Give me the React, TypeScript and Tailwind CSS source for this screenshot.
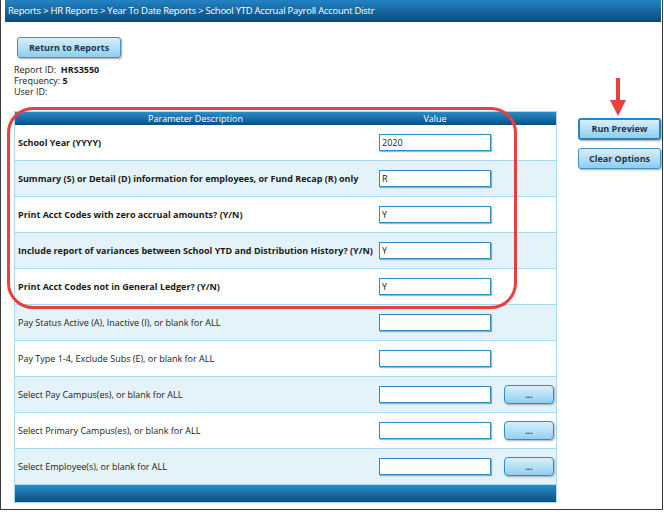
import React from "react";

const rows: { label: string; bold: boolean; value: string; btn: boolean }[] = [
  { label: "School Year (YYYY)", bold: true, value: "2020", btn: false },
  { label: "Summary (S) or Detail (D) information for employees, or Fund Recap (R) only", bold: true, value: "R", btn: false },
  { label: "Print Acct Codes with zero accrual amounts? (Y/N)", bold: true, value: "Y", btn: false },
  { label: "Include report of variances between School YTD and Distribution History? (Y/N)", bold: true, value: "Y", btn: false },
  { label: "Print Acct Codes not in General Ledger? (Y/N)", bold: true, value: "Y", btn: false },
  { label: "Pay Status Active (A), Inactive (I), or blank for ALL", bold: false, value: "", btn: false },
  { label: "Pay Type 1-4, Exclude Subs (E), or blank for ALL", bold: false, value: "", btn: false },
  { label: "Select Pay Campus(es), or blank for ALL", bold: false, value: "", btn: true },
  { label: "Select Primary Campus(es), or blank for ALL", bold: false, value: "", btn: true },
  { label: "Select Employee(s), or blank for ALL", bold: false, value: "", btn: true },
];

const font = { fontFamily: '"Open Sans", "DejaVu Sans", sans-serif' };

export default function App() {
  return (
    <div className="relative w-[664px] h-[512px] bg-white text-[#1a1a1a]" style={font}>
      <div className="relative w-[663px] h-[510px] border-l border-r border-b border-[#3a3a3a] pl-[4px] pr-[1px]">
        <div className="h-[22px] flex items-center pl-[3px] text-white text-[9.5px] tracking-[-0.25px] bg-gradient-to-b from-[#2383c4] to-[#0c4a7a]">
          Reports &gt; HR Reports &gt; Year To Date Reports &gt; School YTD Accrual Payroll Account Distr
        </div>

        <div className="flex pl-[12px] pt-[15px]">
          <button className="w-[104px] h-[21px] rounded-[3px] border border-[#3d92c9] bg-gradient-to-b from-[#d9eefa] to-[#8fcdef] text-[9px] font-bold text-[#1c3553] shadow-[1px_1px_2px_rgba(0,0,0,0.35)]">
            Return to Reports
          </button>
        </div>

        <div className="pl-[9px] pt-[6px] text-[9px]">
          <div className="h-[11px] leading-[11px]">
            Report ID:&nbsp;&nbsp;<span className="font-bold">HRS3550</span>
          </div>
          <div className="h-[11px] leading-[11px]">
            Frequency: <span className="font-bold">5</span>
          </div>
          <div className="h-[11px] leading-[11px]">User ID:</div>
        </div>

        <div className="flex items-start pt-[14px]">
          <div className="ml-[9px] w-[544px] border border-[#a9d9f0]">
            <div className="flex h-[13px] items-center text-white text-[9px] bg-gradient-to-b from-[#2a8cc9] to-[#0c4f80]">
              <div className="w-[361px] text-center">Parameter Description</div>
              <div className="w-[118px] text-center">Value</div>
              <div className="flex-1" />
            </div>
            {rows.map((r, i) => (
              <div
                key={i}
                className={`flex items-center h-[36px] border-b border-[#a9d9f0] ${i % 2 === 1 ? "bg-[#e4f3fa]" : "bg-white"}`}
              >
                <div className={`w-[361px] pl-[3px] text-[9px] whitespace-nowrap ${r.bold ? "font-bold" : ""}`}>{r.label}</div>
                <div className="w-[128px] pl-[3px]">
                  <div className="w-[112px] h-[17px] border border-[#2f8ccb] bg-white text-[9px] pl-[2px] leading-[15px] shadow-[1px_1px_1px_rgba(0,0,0,0.3)]">
                    {r.value}
                  </div>
                </div>
                {r.btn && (
                  <button className="w-[50px] h-[19px] rounded-[4px] border border-[#2f8ccb] bg-gradient-to-b from-[#d7eefa] to-[#92cff0] text-[8px] font-bold text-[#1c3553] leading-none shadow-[1px_1px_2px_rgba(0,0,0,0.3)]">
                    ...
                  </button>
                )}
              </div>
            ))}
            <div className="h-[17px] bg-gradient-to-b from-[#2a8cc9] to-[#0c4f80]" />
          </div>

          <div className="ml-[21px] mt-[7px] flex flex-col gap-[8px]">
            <button className="w-[83px] h-[22px] rounded-[3px] border-2 border-[#2387c6] bg-gradient-to-b from-[#d9eefa] to-[#8fcdef] text-[9px] font-bold text-[#1c3553] shadow-[1px_1px_2px_rgba(0,0,0,0.35)]">
              Run Preview
            </button>
            <button className="w-[83px] h-[21px] rounded-[3px] border border-[#3d92c9] bg-gradient-to-b from-[#d9eefa] to-[#8fcdef] text-[9px] font-bold text-[#1c3553] shadow-[1px_1px_2px_rgba(0,0,0,0.35)]">
              Clear Options
            </button>
          </div>
        </div>
      </div>

      {/* red highlight outline */}
      <div className="absolute left-[7px] top-[107px] w-[510px] h-[202px] rounded-[26px] border-[3px] border-[#e8403f] pointer-events-none" />

      {/* red arrow */}
      <svg className="absolute left-[609px] top-[78px]" width="18" height="40" viewBox="0 0 18 40">
        <rect x="7" y="0" width="4" height="23" fill="#e8403f" />
        <polygon points="1,22 17,22 9,38" fill="#e8403f" />
      </svg>
    </div>
  );
}
